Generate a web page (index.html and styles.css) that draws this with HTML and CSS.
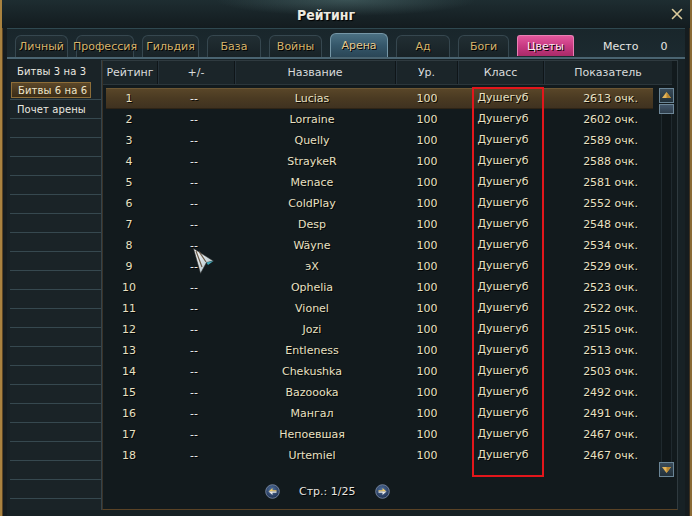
FILE: index.html
```html
<!DOCTYPE html>
<html lang="ru">
<head>
<meta charset="utf-8">
<title>Рейтинг</title>
<link rel="stylesheet" href="styles.css">
</head>
<body>
<div class="window">
  <header class="titlebar">
    <h1 class="title">Рейтинг</h1>
    <span class="close">
      <svg width="12" height="12" viewBox="0 0 12 12"><path d="M1.5 1.5 L10.5 10.5 M10.5 1.5 L1.5 10.5" stroke="#dccb9c" stroke-width="1.6" stroke-linecap="round"/></svg>
    </span>
  </header>
  <div class="panel">
    <nav class="tabs">
      <span class="tab tab-a">Личный</span>
      <span class="tab tab-b">Профессия</span>
      <span class="tab tab-c">Гильдия</span>
      <span class="tab tab-d">База</span>
      <span class="tab tab-e">Войны</span>
      <span class="tab tab-f tab-active">Арена</span>
      <span class="tab tab-g">Ад</span>
      <span class="tab tab-h">Боги</span>
      <span class="tab tab-i tab-pink">Цветы</span>
      <span class="place">Место</span>
      <span class="place-val">0</span>
    </nav>
    <div class="content">
      <aside class="sidebar">
        <div class="side-item first">Битвы 3 на 3</div>
        <div class="side-item"><span class="side-sel">Битвы 6 на 6</span></div>
        <div class="side-item">Почет арены</div>
        <div class="side-item"></div><div class="side-item"></div><div class="side-item"></div><div class="side-item"></div>
        <div class="side-item"></div><div class="side-item"></div><div class="side-item"></div><div class="side-item"></div>
        <div class="side-item"></div><div class="side-item"></div><div class="side-item"></div><div class="side-item"></div>
        <div class="side-item"></div><div class="side-item"></div><div class="side-item"></div><div class="side-item"></div>
        <div class="side-item"></div><div class="side-item"></div><div class="side-item"></div><div class="side-item"></div>
      </aside>
      <section class="table">
        <div class="thead">
          <span class="th">Рейтинг</span>
          <span class="th">+/-</span>
          <span class="th">Название</span>
          <span class="th">Ур.</span>
          <span class="th">Класс</span>
          <span class="th">Показатель</span>
        </div>
        <div class="tbody">
          <div class="rows">
            <div class="row selected"><span class="c-rank">1</span><span class="c-diff">--</span><span class="c-name">Lucias</span><span class="c-lvl">100</span><span class="c-cls">Душегуб</span><span class="c-score">2613 очк.</span></div>
            <div class="row"><span class="c-rank">2</span><span class="c-diff">--</span><span class="c-name">Lorraine</span><span class="c-lvl">100</span><span class="c-cls">Душегуб</span><span class="c-score">2602 очк.</span></div>
            <div class="row"><span class="c-rank">3</span><span class="c-diff">--</span><span class="c-name">Quelly</span><span class="c-lvl">100</span><span class="c-cls">Душегуб</span><span class="c-score">2589 очк.</span></div>
            <div class="row"><span class="c-rank">4</span><span class="c-diff">--</span><span class="c-name">StraykeR</span><span class="c-lvl">100</span><span class="c-cls">Душегуб</span><span class="c-score">2588 очк.</span></div>
            <div class="row"><span class="c-rank">5</span><span class="c-diff">--</span><span class="c-name">Menace</span><span class="c-lvl">100</span><span class="c-cls">Душегуб</span><span class="c-score">2581 очк.</span></div>
            <div class="row"><span class="c-rank">6</span><span class="c-diff">--</span><span class="c-name">ColdPlay</span><span class="c-lvl">100</span><span class="c-cls">Душегуб</span><span class="c-score">2552 очк.</span></div>
            <div class="row"><span class="c-rank">7</span><span class="c-diff">--</span><span class="c-name">Desp</span><span class="c-lvl">100</span><span class="c-cls">Душегуб</span><span class="c-score">2548 очк.</span></div>
            <div class="row"><span class="c-rank">8</span><span class="c-diff">--</span><span class="c-name">Wäyne</span><span class="c-lvl">100</span><span class="c-cls">Душегуб</span><span class="c-score">2534 очк.</span></div>
            <div class="row"><span class="c-rank">9</span><span class="c-diff">--</span><span class="c-name">эX</span><span class="c-lvl">100</span><span class="c-cls">Душегуб</span><span class="c-score">2529 очк.</span></div>
            <div class="row"><span class="c-rank">10</span><span class="c-diff">--</span><span class="c-name">Ophelia</span><span class="c-lvl">100</span><span class="c-cls">Душегуб</span><span class="c-score">2523 очк.</span></div>
            <div class="row"><span class="c-rank">11</span><span class="c-diff">--</span><span class="c-name">Vionel</span><span class="c-lvl">100</span><span class="c-cls">Душегуб</span><span class="c-score">2522 очк.</span></div>
            <div class="row"><span class="c-rank">12</span><span class="c-diff">--</span><span class="c-name">Jozi</span><span class="c-lvl">100</span><span class="c-cls">Душегуб</span><span class="c-score">2515 очк.</span></div>
            <div class="row"><span class="c-rank">13</span><span class="c-diff">--</span><span class="c-name">Entleness</span><span class="c-lvl">100</span><span class="c-cls">Душегуб</span><span class="c-score">2513 очк.</span></div>
            <div class="row"><span class="c-rank">14</span><span class="c-diff">--</span><span class="c-name">Chekushka</span><span class="c-lvl">100</span><span class="c-cls">Душегуб</span><span class="c-score">2503 очк.</span></div>
            <div class="row"><span class="c-rank">15</span><span class="c-diff">--</span><span class="c-name">Bazoooka</span><span class="c-lvl">100</span><span class="c-cls">Душегуб</span><span class="c-score">2492 очк.</span></div>
            <div class="row"><span class="c-rank">16</span><span class="c-diff">--</span><span class="c-name">Мангал</span><span class="c-lvl">100</span><span class="c-cls">Душегуб</span><span class="c-score">2491 очк.</span></div>
            <div class="row"><span class="c-rank">17</span><span class="c-diff">--</span><span class="c-name">Непоевшая</span><span class="c-lvl">100</span><span class="c-cls">Душегуб</span><span class="c-score">2467 очк.</span></div>
            <div class="row"><span class="c-rank">18</span><span class="c-diff">--</span><span class="c-name">Urtemiel</span><span class="c-lvl">100</span><span class="c-cls">Душегуб</span><span class="c-score">2467 очк.</span></div>
          </div>
          <div class="scrollbar">
            <span class="sb-btn">
              <svg width="13" height="13" viewBox="0 0 13 13"><polygon points="6.5,3 11,9 2,9" fill="#e2b45a"/><polygon points="6.5,3 11,9 6.5,9" fill="#b9862f"/></svg>
            </span>
            <span class="sb-thumb"></span>
            <span class="sb-track"></span>
            <span class="sb-btn">
              <svg width="13" height="13" viewBox="0 0 13 13"><polygon points="2,4 11,4 6.5,10" fill="#e2b45a"/><polygon points="6.5,4 11,4 6.5,10" fill="#b9862f"/></svg>
            </span>
          </div>
        </div>
        <div class="pager">
          <span class="pg-btn">
            <svg width="15" height="15" viewBox="0 0 15 15"><defs><radialGradient id="pg1" cx="0.45" cy="0.35" r="0.7"><stop offset="0" stop-color="#50709c"/><stop offset="1" stop-color="#1a2a4a"/></radialGradient></defs><circle cx="7.5" cy="7.5" r="6.8" fill="url(#pg1)" stroke="#8595b0" stroke-width="0.8"/><polygon points="3.5,7.5 7.5,4 7.5,6.3 11.5,6.3 11.5,7.5" fill="#f0c860"/><polygon points="3.5,7.5 11.5,7.5 11.5,8.7 7.5,8.7 7.5,11" fill="#e8e8e8"/></svg>
          </span>
          <span class="pg-text">Стр.: 1/25</span>
          <span class="pg-btn">
            <svg width="15" height="15" viewBox="0 0 15 15"><defs><radialGradient id="pg2" cx="0.45" cy="0.35" r="0.7"><stop offset="0" stop-color="#50709c"/><stop offset="1" stop-color="#1a2a4a"/></radialGradient></defs><circle cx="7.5" cy="7.5" r="6.8" fill="url(#pg2)" stroke="#8595b0" stroke-width="0.8"/><polygon points="11.5,7.5 7.5,4 7.5,6.3 3.5,6.3 3.5,7.5" fill="#f0c860"/><polygon points="11.5,7.5 3.5,7.5 3.5,8.7 7.5,8.7 7.5,11" fill="#e8e8e8"/></svg>
          </span>
        </div>
      </section>
    </div>
  </div>
  <div class="redbox"></div>
  <svg class="cursor" width="22" height="27" viewBox="0 0 22 27">
    <defs><linearGradient id="cg" x1="0" y1="0" x2="1" y2="1"><stop offset="0" stop-color="#ffffff"/><stop offset="0.6" stop-color="#c8d4d8"/><stop offset="1" stop-color="#7fb8c4"/></linearGradient></defs>
    <polygon points="0.5,0.5 20.5,13 13.5,14.5 7.5,25.5" fill="url(#cg)" stroke="#2a2a2a" stroke-width="0.6"/>
    <path d="M3 3 L9 19 M6 3.5 L13 14" stroke="#6b5a48" stroke-width="1.2"/>
    <polygon points="13.5,14.5 20.5,13 15,17" fill="#3fa8b8"/>
  </svg>
</div>
</body>
</html>
```

FILE: styles.css
```css
* { box-sizing: border-box; }

html, body {
  margin: 0;
  padding: 0;
  background: #0c1215;
}

body {
  width: 692px;
  height: 516px;
  overflow: hidden;
  font-family: "DejaVu Sans", "Noto Sans", sans-serif;
  font-size: 11px;
}

.window {
  position: relative;
  width: 692px;
  height: 516px;
  display: flex;
  flex-direction: column;
  padding: 0 7px;
  background: #151c1f;
  box-shadow:
    inset 2px 0 0 #a9823f,
    inset 3px 0 0 #5b4424,
    inset -2px 0 0 #8a6a35,
    inset -3px 0 0 #3c2e1c;
}

/* ---------- title bar ---------- */
.titlebar {
  height: 28px;
  flex: none;
  display: flex;
  align-items: center;
  justify-content: center;
  padding-right: 40px;
  margin: 0 -7px;
  background:
    radial-gradient(ellipse 130px 16px at 346px 0, rgba(110, 150, 150, 0.35), transparent),
    linear-gradient(180deg, #1e2d31 0%, #172226 60%, #131c1f 100%);
  box-shadow: inset 2px 0 0 #a9823f, inset -2px 0 0 #8a6a35;
  position: relative;
}

.title {
  margin: 0;
  padding-top: 1px;
  font-family: "DejaVu Sans Condensed", "DejaVu Sans", sans-serif;
  font-weight: bold;
  font-size: 14px;
  color: #eceae0;
  text-shadow: 1px 1px 1px #000;
}

.close {
  position: absolute;
  right: 9px;
  top: 8px;
  width: 12px;
  height: 12px;
  display: block;
}
.close svg { display: block; }

/* ---------- panel ---------- */
.panel {
  flex: 1;
  display: flex;
  flex-direction: column;
  background: #172125;
  border-top: 1px solid #2f4850;
}

.tabs {
  height: 30px;
  flex: none;
  display: flex;
  align-items: flex-end;
  gap: 8px;
  padding-left: 8px;
  border-bottom: 2px solid #4a6471;
  background: linear-gradient(180deg, #19262b, #1c2a30);
}

.tab {
  height: 22px;
  display: flex;
  align-items: center;
  justify-content: center;
  white-space: nowrap;
  color: #d6b46c;
  background: linear-gradient(180deg, #212e33, #182226);
  border: 1px solid #36474f;
  border-bottom: none;
  border-radius: 6px 6px 0 0;
  text-shadow: 1px 1px 0 #000;
}
.tab-a { width: 53px; }
.tab-b { width: 58px; }
.tab-c { width: 57px; }
.tab-d { width: 54px; }
.tab-e { width: 53px; }
.tab-f { width: 58px; }
.tab-g { width: 54px; }
.tab-h { width: 51px; }
.tab-i { width: 57px; }

.tab-active {
  height: 24px;
  color: #e4c88e;
  background: linear-gradient(180deg, #4b7082 0%, #35576a 50%, #2a4656 100%);
  border-color: #7596a6;
}

.tab-pink {
  color: #fbe8f2;
  background: linear-gradient(180deg, #e2579c 0%, #c73a82 50%, #a92a68 100%);
  border-color: #ea7fb4;
  border-radius: 3px 3px 0 0;
  margin-bottom: 1px;
  height: 21px;
}

.place {
  margin-left: 21px;
  height: 22px;
  display: flex;
  align-items: center;
  color: #e6e6e2;
}
.place-val {
  margin-left: 14px;
  height: 22px;
  display: flex;
  align-items: center;
  color: #e6e6e2;
}

/* ---------- content ---------- */
.content {
  height: 450px;
  flex: none;
  margin-top: 1px;
  display: flex;
  padding-left: 3px;
}

.sidebar {
  width: 92px;
  flex: none;
  padding-top: 2px;
  background: #1a2327;
  border-right: 1px solid #34434a;
  display: flex;
  flex-direction: column;
}

.side-item {
  height: 19px;
  flex: none;
  display: flex;
  align-items: center;
  padding-left: 7px;
  font-size: 10px;
  letter-spacing: 0.1px;
  color: #ece9e0;
  white-space: nowrap;
  border-bottom: 1px solid #36484f;
}
.side-item.first { border-bottom-color: transparent; }

.side-sel {
  margin-left: -6px;
  width: 80px;
  height: 16px;
  display: flex;
  align-items: center;
  padding-left: 6px;
  color: #efe6cc;
  background: linear-gradient(180deg, #5c4829 0%, #47361d 60%, #3a2c17 100%);
  border: 1px solid #8d6d38;
}

/* ---------- table ---------- */
.table {
  width: 576px;
  flex: none;
  background: #121a1d;
  border: 1px solid #2f3a3f;
  border-left-color: #3a3227;
  border-bottom-color: #5a4326;
  display: flex;
  flex-direction: column;
}

.thead {
  width: 569px;
  height: 24px;
  flex: none;
  display: grid;
  grid-template-columns: 54px 77px 161px 62px 86px 129px;
  background: #1b2529;
  border-bottom: 1px solid #2b363b;
}

.th {
  display: flex;
  align-items: center;
  justify-content: center;
  color: #d9dcdc;
  border-left: 1px solid #0f1518;
  box-shadow: inset 1px 0 0 #26323a;
}
.th:first-child { border-left: none; box-shadow: none; }

.tbody {
  margin-top: 3px;
  height: 389px;
  flex: none;
  display: flex;
  gap: 6px;
  padding-left: 3px;
}

.rows {
  width: 547px;
  flex: none;
  display: flex;
  flex-direction: column;
}

.row {
  height: 21px;
  flex: none;
  display: grid;
  grid-template-columns: 46px 84px 152px 78px 74px 113px;
  align-items: center;
  padding-bottom: 1px;
  color: #e8e0c2;
  text-shadow: 1px 1px 0 rgba(0, 0, 0, 0.85);
}

.row.selected {
  background: linear-gradient(180deg, #5a4729 0%, #4a3a22 50%, #3e3120 100%);
  box-shadow: inset 0 1px 0 #6c5734, inset 0 -1px 0 #2e2416;
}

.c-rank, .c-name, .c-lvl, .c-cls, .c-diff { text-align: center; }
.c-diff { color: #f4f4f4; }
.c-cls { position: relative; top: -1px; }
.c-score { text-align: right; padding-right: 15px; }

/* scrollbar */
.scrollbar {
  width: 15px;
  flex: none;
  display: flex;
  flex-direction: column;
}

.sb-btn {
  width: 15px;
  height: 15px;
  flex: none;
  display: flex;
  align-items: center;
  justify-content: center;
  background: linear-gradient(180deg, #3a4c5a, #22303a);
  border: 1px solid #6a8596;
}

.sb-thumb {
  margin-top: 1px;
  height: 10px;
  flex: none;
  background: linear-gradient(180deg, #42566a, #2e3e4c);
  border: 1px solid #6e8798;
}

.sb-track {
  flex: 1;
  margin: 0 2px;
  background: #10171a;
  border-left: 1px solid #1f292e;
  border-right: 1px solid #1f292e;
}

/* pager */
.pager {
  flex: 1;
  display: flex;
  align-items: flex-start;
  padding-top: 7px;
  padding-left: 162px;
}

.pg-btn {
  width: 15px;
  height: 15px;
  display: block;
  flex: none;
}
.pg-btn svg { display: block; }

.pg-text {
  margin: 0 20px 0 19px;
  height: 15px;
  display: flex;
  align-items: center;
  color: #e8e6e0;
  text-shadow: 1px 1px 0 #000;
}

/* overlays */
.redbox {
  position: absolute;
  left: 472px;
  top: 87px;
  width: 72px;
  height: 390px;
  border: 2px solid #e3161b;
}

.cursor {
  position: absolute;
  left: 193px;
  top: 248px;
  display: block;
}
```
